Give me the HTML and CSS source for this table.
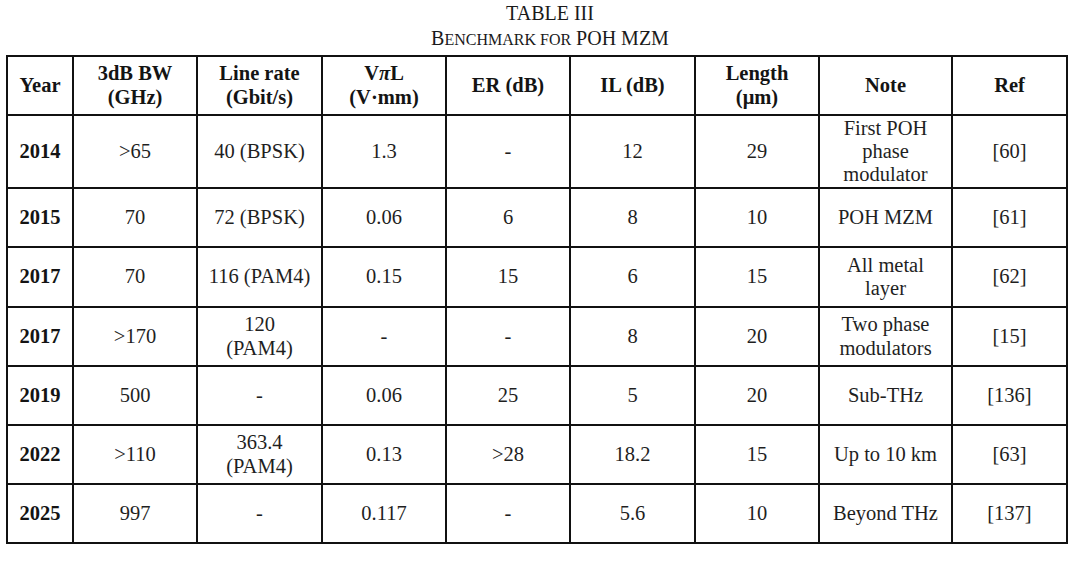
FILE: index.html
```html
<!DOCTYPE html>
<html lang="en">
<head>
<meta charset="utf-8">
<title>Table III – Benchmark for POH MZM</title>
<link rel="stylesheet" href="styles.css">
</head>
<body>
<div class="caption">
  <div class="cap-line">TABLE III</div>
  <div class="cap-line">B<span class="sc">ENCHMARK FOR</span> POH MZM</div>
</div>
<table class="bench">
  <colgroup>
    <col class="c1"><col class="c2"><col class="c3"><col class="c4"><col class="c5"><col class="c6"><col class="c7"><col class="c8"><col class="c9">
  </colgroup>
  <thead>
    <tr class="r-head">
      <th class="first">Year</th>
      <th>3dB BW<br>(GHz)</th>
      <th>Line rate<br>(Gbit/s)</th>
      <th>V<i class="pi">π</i>L<br>(V·mm)</th>
      <th>ER (dB)</th>
      <th>IL (dB)</th>
      <th>Length<br>(μm)</th>
      <th>Note</th>
      <th>Ref</th>
    </tr>
  </thead>
  <tbody>
    <tr class="r-tall">
      <td class="first yr">2014</td><td>&gt;65</td><td>40 (BPSK)</td><td>1.3</td><td>-</td><td>12</td><td>29</td><td>First POH<br>phase<br>modulator</td><td>[60]</td>
    </tr>
    <tr class="r59">
      <td class="first yr">2015</td><td>70</td><td>72 (BPSK)</td><td>0.06</td><td>6</td><td>8</td><td>10</td><td>POH MZM</td><td>[61]</td>
    </tr>
    <tr class="r60">
      <td class="first yr">2017</td><td>70</td><td>116 (PAM4)</td><td>0.15</td><td>15</td><td>6</td><td>15</td><td>All metal<br>layer</td><td>[62]</td>
    </tr>
    <tr class="r59">
      <td class="first yr">2017</td><td>&gt;170</td><td>120<br>(PAM4)</td><td>-</td><td>-</td><td>8</td><td>20</td><td>Two phase<br>modulators</td><td>[15]</td>
    </tr>
    <tr class="r59">
      <td class="first yr">2019</td><td>500</td><td>-</td><td>0.06</td><td>25</td><td>5</td><td>20</td><td>Sub-THz</td><td>[136]</td>
    </tr>
    <tr class="r59">
      <td class="first yr">2022</td><td>&gt;110</td><td>363.4<br>(PAM4)</td><td>0.13</td><td>&gt;28</td><td>18.2</td><td>15</td><td>Up to 10 km</td><td>[63]</td>
    </tr>
    <tr class="r59">
      <td class="first yr">2025</td><td>997</td><td>-</td><td>0.117</td><td>-</td><td>5.6</td><td>10</td><td>Beyond THz</td><td>[137]</td>
    </tr>
  </tbody>
</table>
</body>
</html>
```

FILE: styles.css
```css
html, body {
  margin: 0;
  padding: 0;
  background: #ffffff;
}

body {
  font-family: "Liberation Serif", "Times New Roman", serif;
  color: #1a1a1a;
  width: 1080px;
  height: 561px;
  overflow: hidden;
}

.caption {
  padding-top: 1px;
  padding-left: 20px;
  text-align: center;
  font-size: 20px;
  line-height: 25px;
  color: #1a1a1a;
}

.sc {
  font-size: 0.8em;
}

.bench {
  margin-top: 3px;
  margin-left: 6px;
  width: 1062px;
  table-layout: fixed;
  border-collapse: separate;
  border-spacing: 0;
  border-top: 2px solid #111;
  border-left: 2px solid #111;
  font-size: 20.5px;
  line-height: 23.3px;
}

.c1 { width: 66px; }
.c2 { width: 124px; }
.c3 { width: 125px; }
.c4 { width: 124px; }
.c5 { width: 124px; }
.c6 { width: 125px; }
.c7 { width: 124px; }
.c8 { width: 133px; }
.c9 { width: 115px; }

.bench th,
.bench td {
  box-sizing: border-box;
  padding: 0;
  text-align: center;
  vertical-align: middle;
  border-right: 2px solid #111;
  border-bottom: 2px solid #111;
  color: #1f1f1f;
}

.bench th {
  font-weight: bold;
  color: #141414;
}

.bench td.yr {
  font-weight: bold;
  color: #141414;
}

.pi {
  font-style: italic;
}

.r-head th { height: 59px; }
.r-tall td { height: 73px; }
.r59 td { height: 59px; }
.r60 td { height: 60px; }
```
